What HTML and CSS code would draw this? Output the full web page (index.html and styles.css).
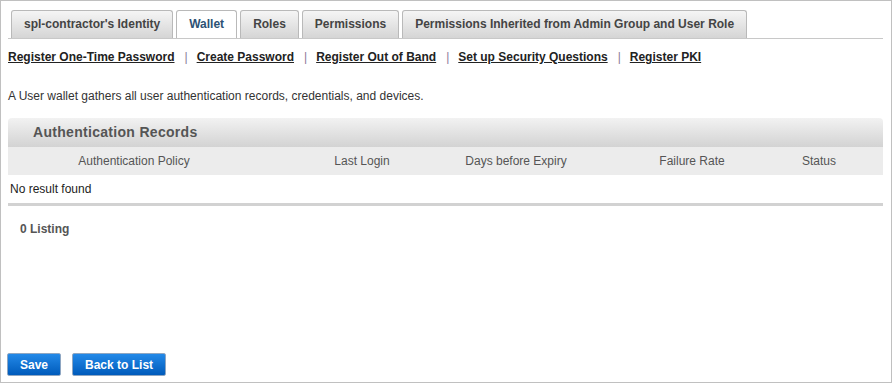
FILE: index.html
```html
<!DOCTYPE html>
<html lang="en">
<head>
    <meta charset="UTF-8">
    <title>User Wallet</title>
    <link rel="stylesheet" href="styles.css">
</head>
<body>
    <div class="frame">
        <ul class="tabs">
            <li class="tab">spl-contractor's Identity</li>
            <li class="tab active">Wallet</li>
            <li class="tab">Roles</li>
            <li class="tab">Permissions</li>
            <li class="tab">Permissions Inherited from Admin Group and User Role</li>
        </ul>

        <div class="actions">
            <a href="#">Register One-Time Password</a><span class="sep">|</span>
            <a href="#">Create Password</a><span class="sep">|</span>
            <a href="#">Register Out of Band</a><span class="sep">|</span>
            <a href="#">Set up Security Questions</a><span class="sep">|</span>
            <a href="#">Register PKI</a>
        </div>

        <p class="intro">A User wallet gathers all user authentication records, credentials, and devices.</p>

        <div class="panel">
            <div class="panel_title">Authentication Records</div>
            <table class="records">
                <colgroup>
                    <col style="width:252px">
                    <col style="width:204px">
                    <col style="width:104px">
                    <col style="width:234px">
                    <col style="width:34px">
                    <col>
                </colgroup>
                <thead>
                    <tr>
                        <th>Authentication Policy</th>
                        <th>Last Login</th>
                        <th>Days before Expiry</th>
                        <th class="rate">Failure Rate</th>
                        <th>Status</th>
                        <th></th>
                    </tr>
                </thead>
                <tbody>
                    <tr><td colspan="6" class="empty">No result found</td></tr>
                </tbody>
            </table>
            <div class="listing">0 Listing</div>
        </div>

        <div class="buttons">
            <button class="btn">Save</button>
            <button class="btn">Back to List</button>
        </div>
    </div>
</body>
</html>
```

FILE: styles.css
```css
html, body {
    margin: 0;
    padding: 0;
    background: #fff;
}
body {
    font-family: "Liberation Sans", Arial, sans-serif;
    font-size: 12px;
    color: #222;
}
.frame {
    height: 100vh;
    box-sizing: border-box;
    border: 1px solid #c0c0c0;
    padding: 9px 8px 6px 7px;
    display: flex;
    flex-direction: column;
}

/* tabs */
.tabs {
    list-style: none;
    margin: 0;
    padding: 0 0 0 3px;
    display: flex;
    gap: 3px;
    border-bottom: 1px solid #c8c8c8;
}
.tab {
    height: 27px;
    line-height: 27px;
    padding: 0 12px;
    border: 1px solid #b9b9b9;
    border-bottom: 0;
    border-radius: 3px 3px 0 0;
    background: linear-gradient(#f5f5f5, #d5d5d5);
    font-weight: bold;
    color: #444;
    white-space: nowrap;
}
.tab.active {
    background: #fff;
    color: #2d5274;
}

/* links under tabs */
.actions {
    margin-top: 11px;
    display: flex;
    line-height: 15px;
    font-weight: bold;
    white-space: nowrap;
}
.actions a {
    color: #222;
    text-decoration: underline;
}
.sep {
    color: #8a7a99;
    font-weight: normal;
    margin: 0 9px 0 10px;
}
.intro {
    margin: 24px 0 0;
    line-height: 15px;
    color: #333;
}

/* records panel */
.panel {
    margin-top: 14px;
}
.panel_title {
    height: 29px;
    line-height: 29px;
    padding-left: 25px;
    border-radius: 4px 4px 0 0;
    background: linear-gradient(#f2f2f2, #d3d3d3);
    font-size: 14px;
    font-weight: bold;
    letter-spacing: 0.3px;
    color: #555;
}
.records {
    width: 100%;
    table-layout: fixed;
    border-collapse: collapse;
    border-bottom: 3px solid #d2d2d2;
}
.records th {
    height: 28px;
    padding: 0;
    background: #ececec;
    font-weight: normal;
    color: #555;
    text-align: center;
    white-space: nowrap;
}
.records th.rate {
    padding-left: 14px;
}
.records td {
    height: 28px;
    padding: 0;
}
.records td.empty {
    padding-left: 2px;
    color: #222;
}
.listing {
    margin-top: 16px;
    padding-left: 12px;
    line-height: 15px;
    font-weight: bold;
    color: #555;
}

/* bottom buttons */
.buttons {
    margin-top: auto;
    display: flex;
    gap: 11px;
    margin-left: -1px;
}
.btn {
    height: 23px;
    padding: 0 12px;
    border: 1px solid #8ea6c2;
    border-radius: 2px;
    background: linear-gradient(#2389e8, #005bbb);
    color: #fff;
    font-family: "Liberation Sans", Arial, sans-serif;
    font-size: 12px;
    font-weight: bold;
    cursor: pointer;
}
.btn:hover {
    background: linear-gradient(#3a96ec, #0a66c6);
}
```
